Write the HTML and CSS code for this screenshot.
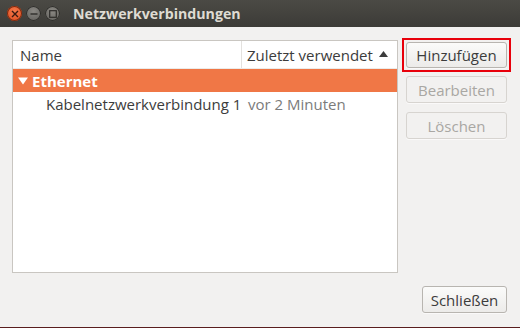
FILE: index.html
```html
<!DOCTYPE html>
<html lang="de">
<head>
  <meta charset="UTF-8">
  <title>Netzwerkverbindungen</title>
  <link rel="stylesheet" href="styles.css">
</head>
<body>
  <div class="window">
    <div class="titlebar">
      <div class="controls">
        <span class="ctl close">
          <svg width="8" height="8" viewBox="0 0 8 8"><path d="M1 1L7 7M7 1L1 7" stroke="#3a1a10" stroke-width="1.4"/></svg>
        </span>
        <span class="ctl">
          <svg width="8" height="8" viewBox="0 0 8 8"><path d="M0.5 4H7.5" stroke="#2e2d2a" stroke-width="1.4"/></svg>
        </span>
        <span class="ctl">
          <svg width="8" height="8" viewBox="0 0 8 8"><rect x="0.7" y="0.7" width="6.6" height="6.6" fill="none" stroke="#2e2d2a" stroke-width="1.2"/></svg>
        </span>
      </div>
      <div class="title">Netzwerkverbindungen</div>
    </div>

    <div class="body">
      <div class="main">
        <div class="tree">
          <div class="tree-head">
            <div class="col-name">Name</div>
            <div class="col-used">
              Zuletzt verwendet
              <svg class="sort" width="9" height="6" viewBox="0 0 9 6"><path d="M0 6H9L4.5 0Z" fill="#3c3c3c"/></svg>
            </div>
          </div>
          <div class="row group">
            <span class="expander">
              <svg width="10" height="8" viewBox="0 0 10 8"><path d="M0 0.5H10L5 7.5Z" fill="#fff"/></svg>
            </span>
            Ethernet
          </div>
          <div class="row child">
            <span class="conn-name">Kabelnetzwerkverbindung 1</span>
            <span class="conn-used">vor 2 Minuten</span>
          </div>
        </div>

        <div class="side">
          <div class="focus-mark">
            <button class="btn">Hinzufügen</button>
          </div>
          <button class="btn" disabled>Bearbeiten</button>
          <button class="btn delete" disabled>Löschen</button>
        </div>
      </div>

      <div class="footer">
        <button class="btn close-btn">Schließen</button>
      </div>
    </div>
  </div>
</body>
</html>
```

FILE: styles.css
```css
body {
  margin: 0;
  font-family: 'Open Sans', 'Noto Sans', sans-serif;
  font-size: 15px;
  color: #3c3c3c;
  background: #f2f1f0;
}

.window {
  width: 520px;
  height: 328px;
  display: flex;
  flex-direction: column;
  background: #f2f1f0;
  border-bottom: 1px solid #5a1e1e;
  box-sizing: border-box;
}

.titlebar {
  height: 27px;
  display: flex;
  align-items: center;
  background: linear-gradient(#4b4a45, #3c3b37);
  flex-shrink: 0;
}

.controls {
  display: flex;
  gap: 4px;
  padding-left: 7px;
}

.ctl {
  width: 15px;
  height: 15px;
  border-radius: 50%;
  background: radial-gradient(circle at 50% 35%, #8a8883, #5d5c58);
  box-shadow: inset 0 0 0 1px #2f2e2b;
  display: flex;
  align-items: center;
  justify-content: center;
}

.ctl.close {
  background: radial-gradient(circle at 50% 35%, #f5784a, #dc4a1c);
  box-shadow: inset 0 0 0 1px #7a2a10;
}

.title {
  margin-left: 13px;
  color: #dfdbd2;
  font-weight: bold;
  font-size: 14.2px;
}

.body {
  flex: 1;
  display: flex;
  flex-direction: column;
  padding: 13px 13px 14px 12px;
}

.main {
  flex: 1;
  display: flex;
  gap: 8px;
}

.tree {
  width: 385px;
  height: 231px;
  border: 1px solid #c9c6c1;
  background: #fff;
}

.tree-head {
  display: flex;
  height: 27px;
  align-items: center;
  border-bottom: 1px solid #ecebe9;
}

.col-name {
  width: 229px;
  padding-left: 7px;
  box-sizing: border-box;
  height: 100%;
  display: flex;
  align-items: center;
  border-right: 1px solid #e3e1de;
}

.col-used {
  padding-left: 5px;
  display: flex;
  align-items: center;
}

.sort {
  margin-left: 6px;
  margin-top: -2px;
}

.row {
  height: 23px;
  display: flex;
  align-items: center;
}

.group {
  background: #f07746;
  color: #fff;
  font-weight: bold;
}

.expander {
  display: flex;
  padding: 0 4px 0 5px;
}

.child {
  padding-left: 33px;
}

.conn-name {
  width: 202px;
}

.conn-used {
  color: #7b7b7b;
}

.side {
  display: flex;
  flex-direction: column;
  gap: 8px;
  padding-top: 2px;
}

.focus-mark {
  margin: -4px;
  padding: 2px;
  border: 2px solid #e8000b;
  display: flex;
}

.btn {
  font-family: inherit;
  font-size: 15px;
  color: #3c3c3c;
  width: 101px;
  height: 26px;
  padding: 0;
  border: 1px solid #b8b5b0;
  border-radius: 3px;
  background: linear-gradient(#fbfbfa, #ecebe9);
  box-shadow: 0 1px 0 rgba(255, 255, 255, 0.6);
}

.btn:disabled {
  color: #a9a7a3;
  border-color: #d7d4d0;
  background: #f2f1f0;
  height: 27px;
}

.delete {
  margin-top: 1px;
}

.footer {
  display: flex;
  justify-content: flex-end;
}

.close-btn {
  width: 85px;
  height: 27px;
}
```
